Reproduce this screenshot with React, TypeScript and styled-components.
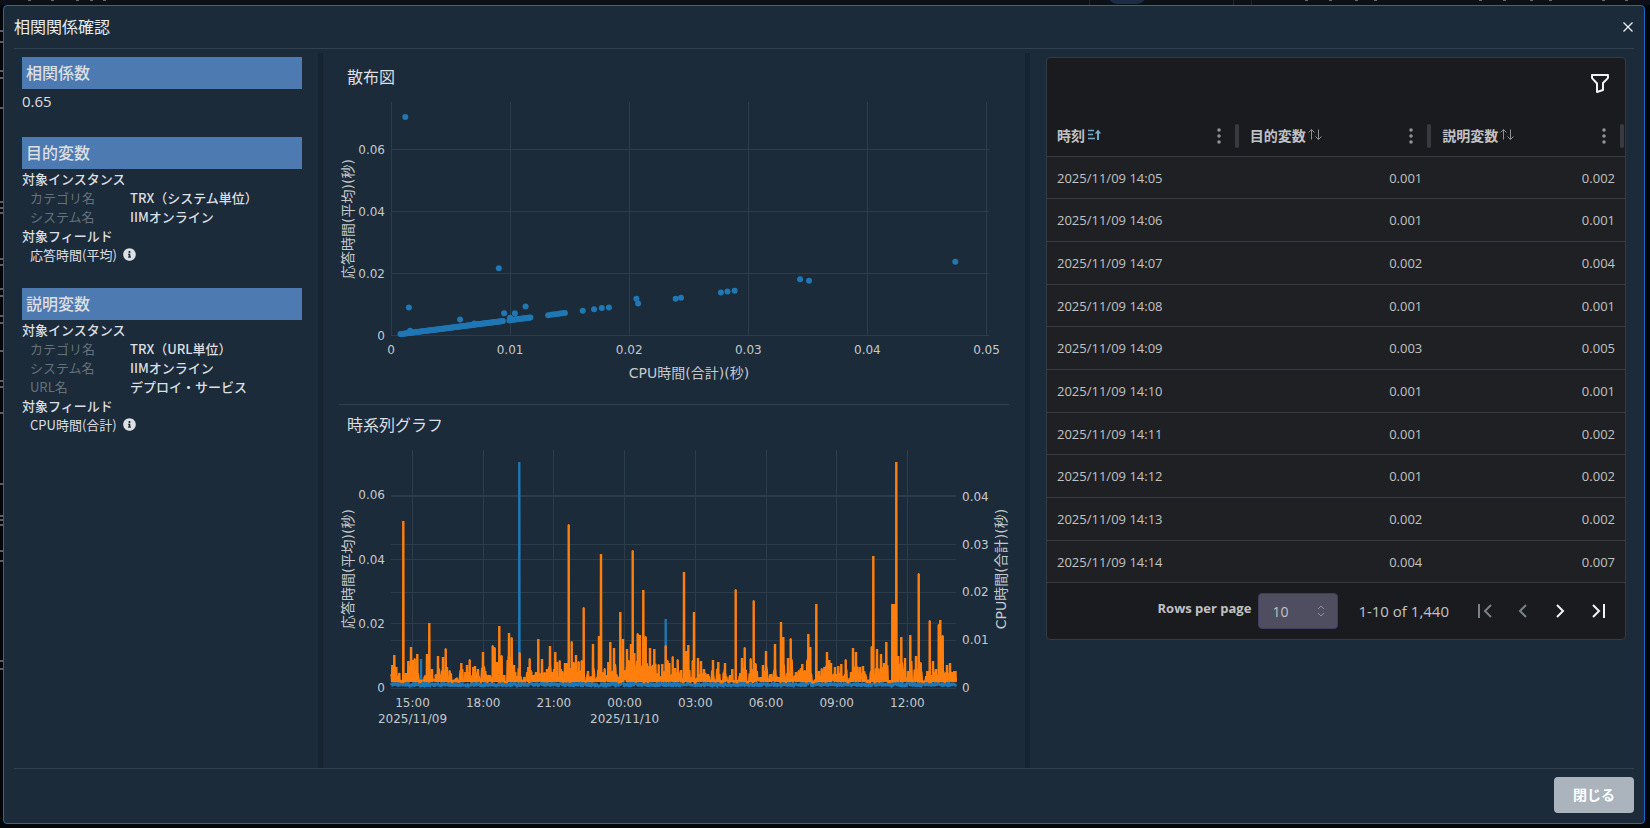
import React from 'react';
import styled, { createGlobalStyle, css } from 'styled-components';
import { FaInfoCircle } from 'react-icons/fa';

const color = {
  page: '#030608',
  appBar: '#0a1118',
  panel: '#1b2b3a',
  outline: '#2065c8',
  rule: '#2f424e',
  divider: '#152430',
  heading: '#4c7ab1',
  text: '#dcdfe3',
  muted: '#66717b',
  tableHead: '#1a1b1e',
  tableRow: '#1f2023',
  tableRule: '#373a40',
  tableText: '#c1c2c5',
  blue: '#1f77b4',
  orange: '#ff7f0e',
  grid: '#2a3d49',
  axis: '#c6c9cc',
};

const sans = `'Open Sans', 'Noto Sans CJK JP', sans-serif`;

const GlobalStyle = createGlobalStyle`
  *, *::before, *::after { box-sizing: border-box; }
  body {
    margin: 0;
    background: ${color.page};
    color: ${color.text};
    font-family: 'Noto Sans CJK JP', sans-serif;
    font-size: 13px;
  }
  button, select { font: inherit; color: inherit; }
  h1, h2, p, dl, dd, dt { margin: 0; font-weight: 400; }
`;

const Page = styled.div`
  position: relative;
  display: flex;
  min-height: 100vh;
  padding: 5px 5px 4px 3px;
`;

const Backdrop = styled.svg`
  position: absolute;
  inset: 0;
  width: 100%;
  height: 100%;
`;

const Dialog = styled.section`
  position: relative;
  flex: 1;
  min-width: 0;
  display: flex;
  flex-direction: column;
  padding: 0 10px;
  background: ${color.panel};
  border: 1px solid ${color.outline};
  border-radius: 4px;
`;

const DialogHeader = styled.header`
  display: flex;
  align-items: center;
  justify-content: space-between;
  height: 43px;
  border-bottom: 1px solid ${color.rule};
`;

const Title = styled.h1`
  padding-bottom: 2px;
  font-size: 16px;
  line-height: 24px;
  color: #e9ebee;
`;

const IconButton = styled.button<{ $size: number }>`
  display: flex;
  align-items: center;
  justify-content: center;
  width: ${(p) => p.$size}px;
  height: ${(p) => p.$size}px;
  padding: 0;
  border: 0;
  background: none;
  color: #f1f3f5;
  cursor: pointer;
  &:disabled { color: #78828a; cursor: default; }
`;

const CloseIconButton = styled(IconButton)`
  margin-right: -4px;
`;

const Body = styled.div`
  flex: 1;
  display: grid;
  grid-template-columns: minmax(0, 304fr) 5px minmax(0, 702fr) 5px minmax(0, 604fr);
  padding-top: 4px;
`;

const Divider = styled.div`
  background: ${color.divider};
`;

const Summary = styled.aside`
  display: flex;
  flex-direction: column;
  gap: 24px;
  padding: 4px 16px 0 8px;
`;

const GroupTitle = styled.h2`
  padding: 3px 4px 5px;
  background: ${color.heading};
  font-size: 16px;
  line-height: 24px;
  font-weight: 500;
`;

const Coefficient = styled.p`
  font-family: ${sans};
  font-size: 15px;
  line-height: 24px;
`;

const Line = styled.p<{ $indent?: boolean }>`
  display: flex;
  align-items: center;
  gap: 6px;
  line-height: 19px;
  font-weight: ${(p) => (p.$indent ? 400 : 500)};
  padding-left: ${(p) => (p.$indent ? 8 : 0)}px;
`;

const Attributes = styled.dl`
  display: grid;
  grid-template-columns: 100px 1fr;
  padding-left: 8px;
  line-height: 19px;
`;

const Term = styled.dt`
  color: ${color.muted};
`;

const Detail = styled.dd`
  font-weight: 500;
`;

const Charts = styled.div`
  padding: 4px 16px 0;
`;

const ChartSection = styled.section<{ $ruled?: boolean }>`
  padding-top: 7px;
  ${(p) => p.$ruled && css`border-bottom: 1px solid ${color.rule};`}
`;

const ChartTitle = styled.h2`
  padding: 0 0 1px 8px;
  font-size: 16px;
  line-height: 24px;
`;

const ChartSvg = styled.svg`
  display: block;
  width: 100%;
  height: auto;
  overflow: visible;
`;

const Tick = styled.text`
  fill: ${color.axis};
  font-family: 'DejaVu Sans', sans-serif;
  font-size: 12px;
`;

const AxisTitle = styled.text`
  fill: ${color.axis};
  font-family: 'DejaVu Sans', 'Noto Sans CJK JP', sans-serif;
  font-size: 14px;
  text-anchor: middle;
`;

const Results = styled.div`
  padding: 4px 8px 24px 16px;
`;

const TableCard = styled.div`
  overflow: hidden;
  background: ${color.tableHead};
  border: 1px solid ${color.tableRule};
  border-radius: 4px;
  color: ${color.tableText};
  font-family: ${sans};
`;

const Toolbar = styled.div`
  display: flex;
  justify-content: flex-end;
  align-items: center;
  height: 50px;
  padding-right: 11px;
`;

const DataTable = styled.table`
  width: 100%;
  table-layout: fixed;
  border-collapse: separate;
  border-spacing: 0;
`;

const HeadCell = styled.th`
  height: 49px;
  padding: 16px 0 8px 10px;
  border-bottom: 1px solid ${color.tableRule};
  font-family: 'Noto Sans CJK JP', sans-serif;
  font-size: 14px;
  line-height: 24px;
  text-align: left;
`;

const HeadContent = styled.div`
  display: flex;
  align-items: center;
  height: 24px;
`;

const SortButton = styled.button`
  display: flex;
  align-items: center;
  padding: 0 0 2px;
  border: 0;
  background: none;
  font-weight: 700;
  cursor: pointer;
`;

const MenuButton = styled(IconButton)`
  margin-left: auto;
  color: #909296;
`;

const ResizeBar = styled.span`
  width: 4px;
  height: 24px;
  margin: 0 1px 0 6px;
  border-radius: 2px;
  background: ${color.tableRule};
`;

const Row = styled.tr`
  height: 43px;
  background: ${color.tableRow};
  &:nth-child(3n + 1) { height: 42px; }
`;

const Cell = styled.td<{ $numeric?: boolean }>`
  padding: 0 10px;
  border-bottom: 1px solid ${color.tableRule};
  font-size: 13px;
  line-height: 20px;
  text-align: ${(p) => (p.$numeric ? 'right' : 'left')};
`;

const Pager = styled.div`
  display: flex;
  align-items: center;
  justify-content: flex-end;
  height: 56px;
  padding-right: 12px;
`;

const PagerLabel = styled.label`
  padding-bottom: 6px;
  margin-right: 7px;
  font-size: 13px;
  font-weight: 700;
`;

const SelectBox = styled.div`
  position: relative;
  display: flex;
  width: 80px;
  margin-right: 20px;
`;

const PageSize = styled.select`
  appearance: none;
  width: 100%;
  height: 36px;
  padding: 0 24px 0 13px;
  border: 1px solid #3b4063;
  border-radius: 4px;
  background: #4e4e60;
  font-size: 14px;
`;

const SelectIcon = styled.svg`
  position: absolute;
  top: 11px;
  right: 10px;
  pointer-events: none;
`;

const Range = styled.span`
  margin-right: 20px;
  font-size: 15px;
`;

const PagerButtons = styled.div`
  display: flex;
  gap: 8px;
`;

const DialogFooter = styled.footer`
  display: flex;
  justify-content: flex-end;
  padding: 8px 0 10px;
  border-top: 1px solid ${color.rule};
`;

const CloseButton = styled.button`
  width: 80px;
  height: 36px;
  padding: 0 0 2px;
  border: 0;
  border-radius: 4px;
  background: #abb4bd;
  color: #fff;
  font-size: 14px;
  font-weight: 700;
  cursor: pointer;
`;

/* ---------- scatter plot ---------- */

const sx = (v: number) => 52 + v * 11910;
const sy = (v: number) => 246 - v * 3100;

const outliers: [number, number][] = [
  [0.0012, 0.0703], [0.0015, 0.0089], [0.0016, 0.0014], [0.00905, 0.0215],
  [0.0058, 0.005], [0.0095, 0.007], [0.0104, 0.007], [0.0113, 0.0092],
  [0.01, 0.0056], [0.00995, 0.0047], [0.007, 0.0037], [0.0132, 0.0064],
  [0.0134, 0.0065], [0.0136, 0.0066], [0.0138, 0.0067], [0.014, 0.0068],
  [0.0142, 0.0069], [0.0144, 0.007], [0.0146, 0.0071], [0.0161, 0.0078],
  [0.01705, 0.0083], [0.0177, 0.0087], [0.0183, 0.0089], [0.0206, 0.0117],
  [0.02075, 0.0102], [0.0239, 0.0117], [0.02435, 0.012], [0.0277, 0.0137],
  [0.02825, 0.014], [0.02885, 0.0143], [0.03435, 0.018], [0.0351, 0.0175],
  [0.04738, 0.0236],
];

const trend: [number, number][] = Array.from({ length: 110 }, (_, i) => {
  const x = 0.0008 + i * 0.0001;
  return [x, x * 0.49 - 0.0001] as [number, number];
}).filter(([x]) => x < 0.0095 || x > 0.0099);

const points = outliers.concat(trend);

function ScatterChart() {
  return (
    <ChartSvg viewBox="0 0 670 315" role="img" aria-label="散布図">
      <g stroke={color.grid} strokeWidth="1" shapeRendering="crispEdges">
        {[0, 1, 2, 3, 4, 5].map((i) => (
          <line key={i} x1={sx(i / 100)} x2={sx(i / 100)} y1="13" y2="246" />
        ))}
        {[0, 2, 4, 6].map((i) => (
          <line key={i} x1="52" x2="650" y1={sy(i / 100)} y2={sy(i / 100)} />
        ))}
      </g>
      <g fill={color.blue}>
        {points.map(([x, y], i) => (
          <circle key={i} cx={sx(x)} cy={Math.min(sy(y), 245)} r="3" />
        ))}
      </g>
      {['0', '0.02', '0.04', '0.06'].map((t) => (
        <Tick key={t} x="46" y={sy(Number(t)) + 5} textAnchor="end">{t}</Tick>
      ))}
      {['0', '0.01', '0.02', '0.03', '0.04', '0.05'].map((t) => (
        <Tick key={t} x={sx(Number(t))} y="265" textAnchor="middle">{t}</Tick>
      ))}
      <AxisTitle x="350" y="289">CPU時間(合計)(秒)</AxisTitle>
      <AxisTitle transform="translate(14 130) rotate(-90)">応答時間(平均)(秒)</AxisTitle>
    </ChartSvg>
  );
}

/* ---------- time series ---------- */

// [offset along the time axis, height above the zero line]
const cpuPeaks: [number, number][] = [
  [1.3, 23], [3.3, 33], [5.3, 21], [8.3, 15], [12.3, 167], [15, 15], [17.3, 27], [20, 41],
  [22, 28], [23.7, 29], [26.3, 34], [34, 12], [36, 34], [38.3, 65], [41, 19], [44.7, 13],
  [47, 32], [49.3, 13], [52, 31], [54.7, 39], [56, 21], [58.7, 17], [64.7, 9], [70.3, 25],
  [74.3, 16], [76, 23], [78.7, 28], [82.3, 21], [84, 22], [87, 19], [92, 36], [94.3, 17],
  [98.3, 13], [101.7, 42], [103.7, 40], [106, 26], [108.3, 62], [110.7, 32], [113.3, 13],
  [118, 55], [120.7, 50], [123, 23], [125, 12], [128.7, 35], [133.3, 11], [137.3, 21],
  [138.7, 29], [140.3, 16], [142.3, 13], [145, 16], [147.3, 49], [151, 29], [153.7, 15],
  [156, 19], [159, 42], [161.3, 16], [164.3, 36], [166, 26], [168.7, 27], [171, 17],
  [174, 25], [176, 25], [177.7, 163], [180.7, 46], [182.7, 25], [185, 33], [187.7, 26],
  [190.7, 27], [192.7, 80], [197, 17], [199.7, 11], [202, 44], [205.3, 9], [208, 52],
  [210, 134], [211.7, 15], [213.7, 19], [217.3, 26], [219.3, 46], [223, 40], [225.7, 13],
  [229.3, 76], [232, 49], [236, 39], [237.7, 27], [240, 44], [241.7, 137], [243.3, 35],
  [246.7, 54], [249, 53], [251, 21], [252.3, 98], [254.7, 51], [259, 40], [263.3, 39],
  [267.7, 23], [271.3, 24], [274.7, 42], [276.7, 27], [278.3, 25], [281.7, 31], [284, 20],
  [286.7, 28], [290, 18], [293, 116], [295.3, 37], [297.3, 43], [301.7, 27], [303, 76],
  [307, 30], [310, 27], [313, 19], [317, 14], [322, 28], [327.3, 26], [334, 25],
  [339.3, 13], [341.3, 19], [344.7, 98], [349.3, 15], [351, 30], [353.7, 40], [359.7, 29],
  [362.7, 87], [364.7, 24], [370, 11], [372, 23], [375, 37], [380, 14], [384, 44],
  [387, 11], [390, 66], [392.3, 51], [397, 30], [399.7, 49], [405, 16], [407.7, 17],
  [409.7, 19], [411.3, 24], [413.7, 17], [417.3, 54], [419.3, 41], [425.3, 84], [428, 17],
  [430.7, 19], [433.3, 21], [436, 36], [438.3, 28], [440, 25], [444, 21], [447.3, 22],
  [450.3, 24], [454.7, 28], [460, 16], [462, 40], [465, 36], [469, 21], [472, 22],
  [474.3, 14], [480.7, 41], [482.3, 132], [486, 39], [490, 34], [493, 25], [495.3, 46],
  [501.3, 84], [503.3, 84], [505.3, 226], [507.3, 32], [510.3, 51], [514, 30], [517, 17],
  [519.3, 53], [525, 32], [527.7, 114], [529.7, 25], [536.3, 17], [538.7, 67], [542, 27],
  [545, 19], [547.7, 63], [549.3, 68], [551.7, 52], [556, 23], [559, 25], [561, 16],
  [563.3, 17], [564.5, 17],
];

const responsePeaks: [number, number][] = [[30, 29], [128.3, 226], [274.7, 69]];

function makeNoise(seed: number) {
  let state = seed;
  return () => {
    state = (state * 1103515245 + 12345) % 2147483648;
    return state / 2147483648;
  };
}

interface Series {
  peaks: [number, number][];
  low: number;
  spread: number;
  reach: number;
  step: number;
  seed: number;
}

function linePath({ peaks, low, spread, reach, step, seed }: Series) {
  const next = makeNoise(seed);
  const samples: [number, number][] = [];
  for (let x = 0; x <= 565; x += step) {
    const close = peaks.find(([px, h]) => h < 60 && Math.abs(px - x) < 1.6);
    const lift = close ? next() * close[1] * reach : 0;
    samples.push([x, low + next() * spread + lift]);
  }
  peaks.forEach(([x, h]) => {
    samples.push([x - 0.4, low + 1], [x - 0.2, h], [x + 0.2, h], [x + 0.4, low + 1]);
  });
  samples.sort((a, b) => a[0] - b[0]);
  return 'M' + samples.map(([x, h]) => `${(52 + x).toFixed(1)} ${(251 - h).toFixed(1)}`).join('L');
}

const cpuPath = linePath({ peaks: cpuPeaks, low: 5, spread: 3, reach: 0.45, step: 0.5, seed: 7 });
const responsePath = linePath({ peaks: responsePeaks, low: 1, spread: 5, reach: 0, step: 0.25, seed: 21 });

const hours = ['15:00', '18:00', '21:00', '00:00', '03:00', '06:00', '09:00', '12:00'];
const tx = (i: number) => 73.5 + i * 70.7;
const leftY = (v: number) => 251 - v * 3210;
const rightY = (v: number) => 251 - v * 4780;

function TimeSeriesChart() {
  return (
    <ChartSvg viewBox="0 0 670 320" role="img" aria-label="時系列グラフ">
      <g stroke={color.grid} strokeWidth="1" shapeRendering="crispEdges">
        {hours.map((h, i) => (
          <line key={h} x1={tx(i)} x2={tx(i)} y1="13" y2="251" />
        ))}
        {[0, 2, 4, 6].map((i) => (
          <line key={i} x1="52" x2="617" y1={leftY(i / 100)} y2={leftY(i / 100)} />
        ))}
        {[1, 2, 3, 4].map((i) => (
          <line key={i} x1="52" x2="617" y1={rightY(i / 100)} y2={rightY(i / 100)} />
        ))}
      </g>
      <g fill="none" strokeWidth="2" strokeLinejoin="bevel">
        <path d={responsePath} stroke={color.blue} />
        <path d={cpuPath} stroke={color.orange} />
      </g>
      {['0', '0.02', '0.04', '0.06'].map((t) => (
        <Tick key={t} x="46" y={leftY(Number(t)) + 4} textAnchor="end">{t}</Tick>
      ))}
      {['0', '0.01', '0.02', '0.03', '0.04'].map((t) => (
        <Tick key={t} x="623" y={rightY(Number(t)) + 4}>{t}</Tick>
      ))}
      {hours.map((h, i) => (
        <Tick key={h} x={tx(i)} y="270" textAnchor="middle">{h}</Tick>
      ))}
      <Tick x={tx(0)} y="286" textAnchor="middle">2025/11/09</Tick>
      <Tick x={tx(3)} y="286" textAnchor="middle">2025/11/10</Tick>
      <AxisTitle transform="translate(14 132) rotate(-90)">応答時間(平均)(秒)</AxisTitle>
      <AxisTitle transform="translate(667 132) rotate(-90)">CPU時間(合計)(秒)</AxisTitle>
    </ChartSvg>
  );
}

/* ---------- table ---------- */

const rows: [string, string, string][] = [
  ['2025/11/09 14:05', '0.001', '0.002'],
  ['2025/11/09 14:06', '0.001', '0.001'],
  ['2025/11/09 14:07', '0.002', '0.004'],
  ['2025/11/09 14:08', '0.001', '0.001'],
  ['2025/11/09 14:09', '0.003', '0.005'],
  ['2025/11/09 14:10', '0.001', '0.001'],
  ['2025/11/09 14:11', '0.001', '0.002'],
  ['2025/11/09 14:12', '0.001', '0.002'],
  ['2025/11/09 14:13', '0.002', '0.002'],
  ['2025/11/09 14:14', '0.004', '0.007'],
];

const SortedIcon = () => (
  <svg width="18" height="18" viewBox="0 0 18 18" fill="none" stroke="#74a9cf" strokeWidth="2" aria-hidden>
    <path d="M3 4.5h6M3 8.5h5M3 12.5h7" strokeWidth="1.5" />
    <path d="M13 14V6" />
    <path d="M9.8 7.5 13 3.5l3.2 4z" fill="#74a9cf" stroke="none" />
  </svg>
);

const UnsortedIcon = () => (
  <svg width="18" height="18" viewBox="0 0 18 18" fill="none" stroke="#8c8e92" strokeWidth="1" aria-hidden>
    <path d="M5.5 13.5v-10M2.5 6.5l3-3 3 3M12.5 3.5v10M9.5 10.5l3 3 3-3" />
  </svg>
);

const DotsIcon = () => (
  <svg width="4" height="18" viewBox="0 0 4 18" fill="currentColor" aria-hidden>
    <circle cx="2" cy="3" r="1.8" />
    <circle cx="2" cy="9" r="1.8" />
    <circle cx="2" cy="15" r="1.8" />
  </svg>
);

function ColumnHeader({ label, sorted }: { label: string; sorted?: boolean }) {
  return (
    <HeadCell scope="col" aria-sort={sorted ? 'ascending' : undefined}>
      <HeadContent>
        <SortButton type="button">
          {label}
          {sorted ? <SortedIcon /> : <UnsortedIcon />}
        </SortButton>
        <MenuButton $size={20} type="button" aria-label={`${label}の列メニュー`}>
          <DotsIcon />
        </MenuButton>
        <ResizeBar />
      </HeadContent>
    </HeadCell>
  );
}

const pagerIcons = [
  { name: '最初のページ', d: 'M5 3v14M17 4l-6 6 6 6', disabled: true },
  { name: '前のページ', d: 'M14 4l-6 6 6 6', disabled: true },
  { name: '次のページ', d: 'M7 4l6 6-6 6', disabled: false },
  { name: '最後のページ', d: 'M5 4l6 6-6 6M16 3v14', disabled: false },
];

function ResultTable() {
  return (
    <TableCard>
      <Toolbar>
        <IconButton $size={28} type="button" aria-label="フィルター">
          <svg width="24" height="24" viewBox="0 0 24 24" fill="none" stroke="currentColor" strokeWidth="2" strokeLinejoin="round" aria-hidden>
            <path d="M4 4h16v2.2a2 2 0 0 1-.6 1.4L15 12v7l-6 2v-8.5L4.5 7.6A2 2 0 0 1 4 6.2z" />
          </svg>
        </IconButton>
      </Toolbar>
      <DataTable>
        <thead>
          <tr>
            <ColumnHeader label="時刻" sorted />
            <ColumnHeader label="目的変数" />
            <ColumnHeader label="説明変数" />
          </tr>
        </thead>
        <tbody>
          {rows.map(([time, target, explain]) => (
            <Row key={time}>
              <Cell>{time}</Cell>
              <Cell $numeric>{target}</Cell>
              <Cell $numeric>{explain}</Cell>
            </Row>
          ))}
        </tbody>
      </DataTable>
      <Pager>
        <PagerLabel htmlFor="page-size">Rows per page</PagerLabel>
        <SelectBox>
          <PageSize id="page-size" defaultValue="10">
            <option>10</option>
            <option>20</option>
            <option>50</option>
          </PageSize>
          <SelectIcon width="14" height="14" viewBox="0 0 14 14" fill="none" stroke="#909296" strokeWidth="1" aria-hidden>
            <path d="M4 5l3-3 3 3M4 9l3 3 3-3" />
          </SelectIcon>
        </SelectBox>
        <Range>1-10 of 1,440</Range>
        <PagerButtons>
          {pagerIcons.map((icon) => (
            <IconButton key={icon.name} $size={30} type="button" aria-label={icon.name} disabled={icon.disabled}>
              <svg width="20" height="20" viewBox="0 0 20 20" fill="none" stroke="currentColor" strokeWidth="2" aria-hidden>
                <path d={icon.d} />
              </svg>
            </IconButton>
          ))}
        </PagerButtons>
      </Pager>
    </TableCard>
  );
}

/* ---------- summary ---------- */

interface VariableProps {
  title: string;
  attributes: [string, string][];
  field: string;
}

function Variable({ title, attributes, field }: VariableProps) {
  return (
    <section>
      <GroupTitle>{title}</GroupTitle>
      <Line>対象インスタンス</Line>
      <Attributes>
        {attributes.map(([name, value]) => (
          <React.Fragment key={name}>
            <Term>{name}</Term>
            <Detail>{value}</Detail>
          </React.Fragment>
        ))}
      </Attributes>
      <Line>対象フィールド</Line>
      <Line $indent>
        {field}
        <FaInfoCircle size={13} />
      </Line>
    </section>
  );
}

const edgeMarks = [30, 41, 70, 77, 107, 201, 207, 212, 258, 264, 288, 295, 315, 322, 350, 380, 386, 412, 483, 515, 519, 524, 550, 560, 660, 668];
const topMarks = [28, 51, 76, 90, 103, 1305, 1329, 1355, 1374, 1479, 1503, 1530, 1549, 1602, 1625];

export default function App() {
  return (
    <Page>
      <GlobalStyle />
      <Backdrop aria-hidden>
        <rect width="100%" height="5" fill={color.appBar} />
        <rect x="1108" y="-14" width="38" height="18" rx="9" fill="#1c2c44" />
        {[1089, 1233, 1251].map((x) => (
          <rect key={x} x={x} width="1" height="5" fill="#1b2833" />
        ))}
        {topMarks.map((x) => (
          <rect key={x} x={x} width="3" height="1" fill="#6d6a66" />
        ))}
        {edgeMarks.map((y) => (
          <rect key={y} y={y} width="3" height="2" fill="#5a5e62" />
        ))}
      </Backdrop>
      <Dialog role="dialog" aria-labelledby="dialog-title">
        <DialogHeader>
          <Title id="dialog-title">相関関係確認</Title>
          <CloseIconButton $size={20} type="button" aria-label="ダイアログを閉じる">
            <svg width="12" height="12" viewBox="0 0 12 12" stroke="currentColor" strokeWidth="1.2" aria-hidden>
              <path d="M1.5 1.5l9 9M10.5 1.5l-9 9" />
            </svg>
          </CloseIconButton>
        </DialogHeader>
        <Body>
          <Summary>
            <section>
              <GroupTitle>相関係数</GroupTitle>
              <Coefficient>0.65</Coefficient>
            </section>
            <Variable
              title="目的変数"
              attributes={[['カテゴリ名', 'TRX（システム単位）'], ['システム名', 'IIMオンライン']]}
              field="応答時間(平均)"
            />
            <Variable
              title="説明変数"
              attributes={[['カテゴリ名', 'TRX（URL単位）'], ['システム名', 'IIMオンライン'], ['URL名', 'デプロイ・サービス']]}
              field="CPU時間(合計)"
            />
          </Summary>
          <Divider />
          <Charts>
            <ChartSection $ruled>
              <ChartTitle>散布図</ChartTitle>
              <ScatterChart />
            </ChartSection>
            <ChartSection>
              <ChartTitle>時系列グラフ</ChartTitle>
              <TimeSeriesChart />
            </ChartSection>
          </Charts>
          <Divider />
          <Results>
            <ResultTable />
          </Results>
        </Body>
        <DialogFooter>
          <CloseButton type="button">閉じる</CloseButton>
        </DialogFooter>
      </Dialog>
    </Page>
  );
}
